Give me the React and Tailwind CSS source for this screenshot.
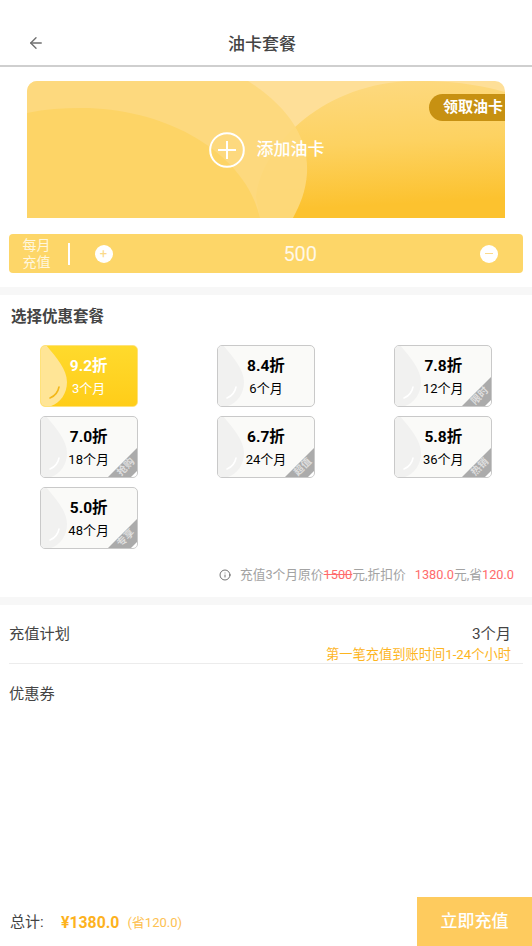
import { ArrowLeft, Info } from 'lucide-react';

const plans = [
  { rate: '9.2折', months: '3个月', active: true },
  { rate: '8.4折', months: '6个月' },
  { rate: '7.8折', months: '12个月', tag: '限时' },
  { rate: '7.0折', months: '18个月', tag: '抢购' },
  { rate: '6.7折', months: '24个月', tag: '超值' },
  { rate: '5.8折', months: '36个月', tag: '热销' },
  { rate: '5.0折', months: '48个月', tag: '专享' },
];

function PlanCard({ plan }) {
  const { rate, months, tag, active } = plan;
  return (
    <div
      className={`relative w-[98px] h-[62px] rounded-[5px] border overflow-hidden ${
        active
          ? 'border-[#ffe27a] bg-gradient-to-b from-[#ffda2c] to-[#ffcd18] text-white'
          : 'border-[#c9c9c9] bg-[#fafaf8] text-black'
      }`}
    >
      <svg className="absolute left-[-1px] top-[-1px]" width="98" height="62" viewBox="0 0 98 62">
        <path
          d="M2 0 L6 0 C16 12 27 24 27 37 C27 51 17 62 5 62 L0 62 L0 2 Z"
          fill={active ? '#ffe596' : '#f1f1f0'}
        />
        <path
          d="M19 42 C18 47 15 51 10 53"
          fill="none"
          stroke={active ? '#f3b81a' : '#ffffff'}
          strokeWidth="1.6"
          strokeLinecap="round"
        />
        {tag && (
          <>
            <path d="M67 62 L98 31 L98 62 Z" fill="#ababab" />
            <path d="M90 62 L98 54 L98 62 Z" fill="#ffffff" />
          </>
        )}
      </svg>
      <div className="relative flex flex-col items-center pt-[8px]">
        <span className="text-[15.5px] leading-[24px] font-bold">{rate}</span>
        <span className="text-[13px] leading-[20px] mt-[1px]">{months}</span>
      </div>
      {tag && (
        <span className="absolute right-[1px] bottom-[4px] text-[10px] leading-[12px] font-bold text-[#dedede] -rotate-45">
          {tag}
        </span>
      )}
    </div>
  );
}

function OilCardArt() {
  return (
    <svg className="absolute inset-0" width="478" height="137" viewBox="0 0 478 137" preserveAspectRatio="none">
      <defs>
        <linearGradient id="sun" x1="0.45" y1="0" x2="0.55" y2="1">
          <stop offset="0" stopColor="#fdd97f" />
          <stop offset="0.45" stopColor="#fdd261" />
          <stop offset="0.9" stopColor="#fcc22f" />
        </linearGradient>
      </defs>
      <rect width="478" height="137" fill="#fedf98" />
      <path d="M229 116 C236 60 300 2 385 0 C420 -1 455 4 478 11 L478 137 L233 137 Z" fill="url(#sun)" />
      <path
        d="M0 0 L221 0 C262 26 282 58 280 92 C279 110 273 124 266 137 L0 137 Z"
        fill="#fdd97c"
        fillOpacity="0.94"
      />
      <path d="M0 32 C18 28 36 27 54 27 C140 27 218 72 233 137 L0 137 Z" fill="#fdd466" />
    </svg>
  );
}

export default function App() {
  return (
    <div className="flex flex-col h-[946px] w-[532px] bg-white overflow-hidden font-['Roboto','Noto_Sans_CJK_SC',sans-serif]">
      {/* header */}
      <div className="relative h-[67px] shrink-0 pt-[33px] border-b-2 border-[#cfcfcf] flex justify-center">
        <ArrowLeft className="absolute left-[27px] top-[34px] text-[#6f6f6f]" size={18} strokeWidth={1.8} />
        <span className="text-[17px] leading-[22px] font-medium text-[#444] -ml-[8px]">油卡套餐</span>
      </div>

      {/* oil card */}
      <div className="relative mx-[27px] w-[478px] mt-[14px] h-[137px] rounded-t-[10px] overflow-hidden shrink-0">
        <OilCardArt />
        <div className="absolute right-0 top-[13px] w-[76px] h-[27px] rounded-l-full bg-[#c79112] text-white text-[15px] leading-[27px] font-bold pl-[14px] whitespace-nowrap">
          领取油卡
        </div>
        <div className="relative h-full flex items-center justify-center gap-[12px] pl-[1px]">
          <svg width="36" height="36" viewBox="0 0 36 36" fill="none" stroke="#ffffff" strokeWidth="2">
            <circle cx="18" cy="18" r="16.8" />
            <path d="M18 9 V27 M9 18 H27" />
          </svg>
          <span className="text-[17px] font-medium text-white">添加油卡</span>
        </div>
      </div>

      {/* monthly amount */}
      <div className="mx-[9px] mt-[16px] h-[39px] shrink-0 rounded-[4px] bg-[#fdd668] flex items-center text-white">
        <span className="w-[55px] mr-[4px] text-center text-[14px] leading-[17px] text-[#fff6dd]">
          每月
          <br />
          充值
        </span>
        <span className="w-[1.5px] h-[22px] bg-white"></span>
        <span className="ml-[25px] w-[18px] h-[18px] rounded-full bg-white flex items-center justify-center text-[#fbd98a] text-[13px] leading-none">
          +
        </span>
        <span className="flex-1 text-center text-[20px] pl-[8px] text-[#fff8e8]">500</span>
        <span className="mr-[25px] w-[18px] h-[18px] rounded-full bg-white flex items-center justify-center">
          <span className="w-[8px] h-px bg-[#fbd98a]"></span>
        </span>
      </div>

      <div className="h-[8px] mt-[14px] bg-[#f7f7f7] shrink-0"></div>

      {/* plans */}
      <div className="px-[11px] pt-[12px] shrink-0">
        <h2 className="text-[15.5px] leading-[21px] font-bold text-[#444]">选择优惠套餐</h2>
      </div>
      <div className="grid grid-cols-3 gap-y-[9px] mt-[17px] shrink-0">
        {plans.map((p) => (
          <div key={p.rate} className="flex justify-center">
            <PlanCard plan={p} />
          </div>
        ))}
      </div>

      <div className="mt-[18px] pr-[18px] flex items-center justify-end text-[12.75px] leading-[16px] text-[#a3a3a3] shrink-0">
        <Info size={12} className="text-[#444] mr-[9px]" strokeWidth={1.5} />
        <span>
          充值3个月原价<span className="text-[#ff6b6b] line-through">1500</span>元,折扣价
        </span>
        <span className="ml-[9px]">
          <span className="text-[#ff6b6b]">1380.0</span>元,省<span className="text-[#ff6b6b]">120.0</span>
        </span>
      </div>

      <div className="h-[8px] mt-[14px] bg-[#f7f7f7] shrink-0"></div>

      {/* plan detail */}
      <div className="mx-[9px] h-[59px] shrink-0 border-b border-[#ececec] pt-[19px] text-[15.25px] leading-[20px] text-[#444]">
        <div className="flex justify-between pr-[12px]">
          <span>充值计划</span>
          <span>3个月</span>
        </div>
        <div className="text-right pr-[12px] text-[13.25px] leading-[18px] mt-[2px] text-[#fdb51f]">第一笔充值到账时间1-24个小时</div>
      </div>
      <div className="px-[9px] pt-[20px] text-[15.25px] leading-[20px] text-[#444] shrink-0">优惠券</div>

      {/* footer */}
      <div className="mt-auto h-[49px] flex items-center shrink-0">
        <div className="flex-1 flex items-center pl-[10px] pt-[2px]">
          <span className="text-[15px] text-[#444] w-[51px]">总计:</span>
          <span className="text-[15.8px] font-bold text-[#fdb21d]">¥1380.0</span>
          <span className="ml-[8px] text-[13px] text-[#fdc151]">(省120.0)</span>
        </div>
        <button className="w-[115px] h-full bg-[#fecb5e] text-white text-[17px] font-medium">立即充值</button>
      </div>
    </div>
  );
}
